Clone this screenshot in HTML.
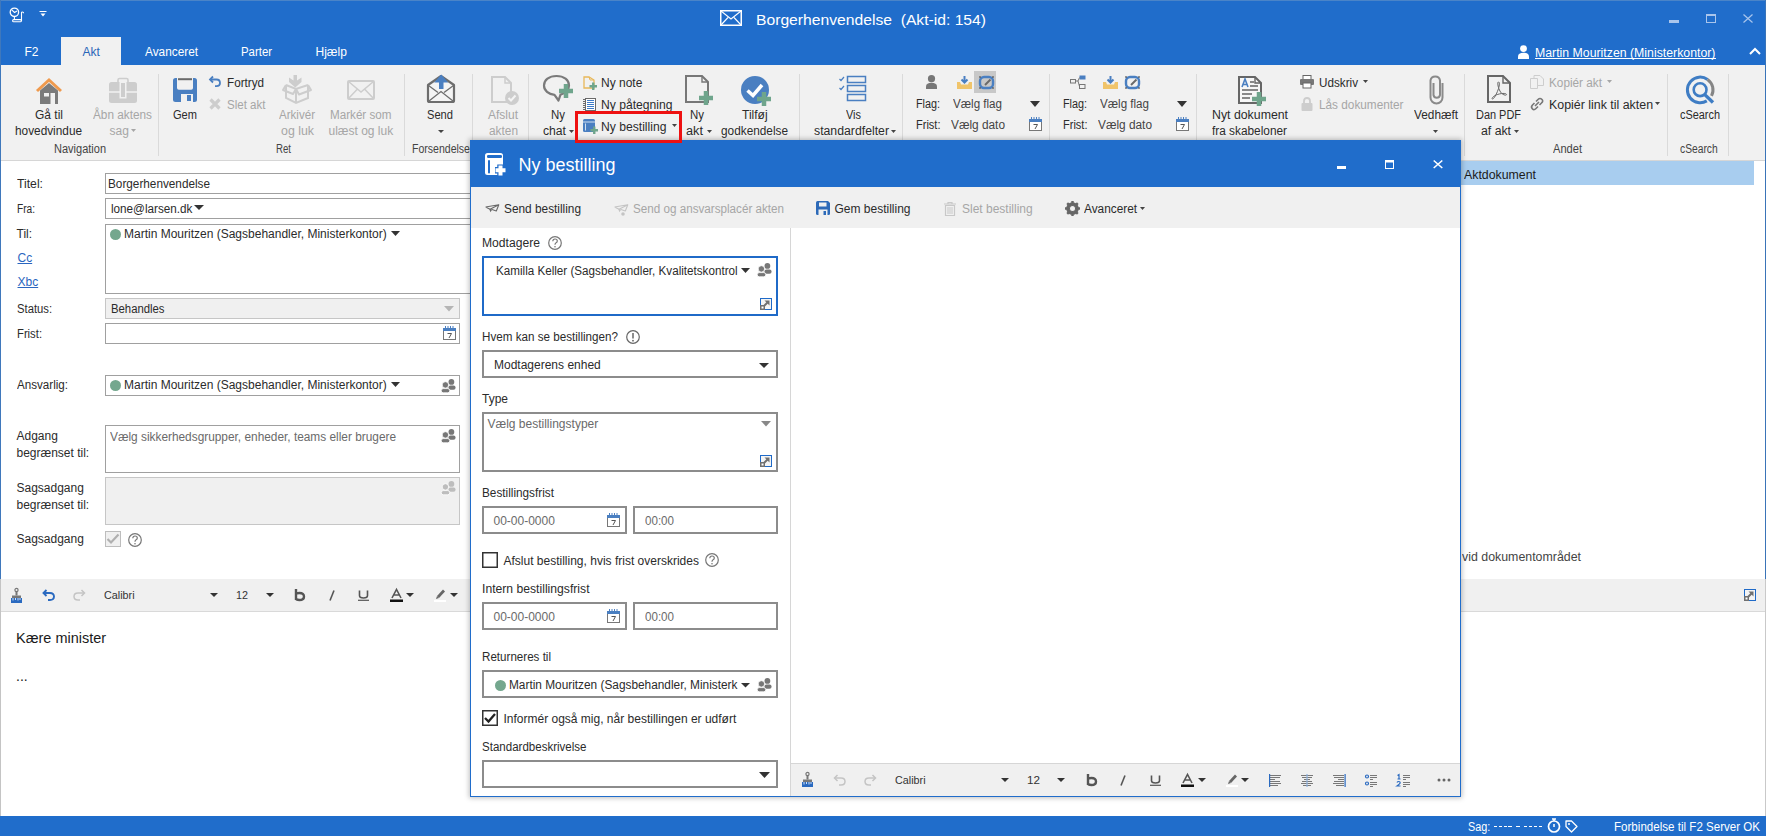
<!DOCTYPE html>
<html><head><meta charset="utf-8">
<style>
*{box-sizing:border-box}
html,body{margin:0;padding:0}
body{width:1766px;height:836px;overflow:hidden;position:relative;background:#fff;font-family:"Liberation Sans",sans-serif;font-size:12px;color:#262626}
.a{position:absolute}
.t{position:absolute;white-space:nowrap;line-height:1}
svg{position:absolute;overflow:visible}
</style></head><body>

<div class="a" style="left:0px;top:0px;width:1766px;height:65px;background:#206dcb"></div>
<div class="a" style="left:0px;top:0px;width:1766px;height:1px;background:#4a84c8"></div>
<div class="a" style="left:1px;top:65px;width:1764px;height:96px;background:#f1f1f1;border-bottom:1px solid #d6d6d6"></div>
<div class="a" style="left:0px;top:0px;width:1px;height:579px;background:#3f78bc"></div>
<div class="a" style="left:0px;top:579px;width:1px;height:237px;background:#c4c4c4"></div>
<div class="a" style="left:1765px;top:0px;width:1px;height:579px;background:#3a74b8"></div>
<div class="a" style="left:1765px;top:579px;width:1px;height:237px;background:#c9c9c9"></div>
<div class="a" style="left:1px;top:579px;width:1764px;height:33px;background:#f0f0f0;border-bottom:1px solid #d9d9d9"></div>
<div class="a" style="left:0px;top:816px;width:1766px;height:20px;background:#206dcb"></div>
<svg style="left:9px;top:7px;" width="16" height="16" viewBox="0 0 16 16"><circle cx="5.4" cy="5.3" r="4.2" fill="none" stroke="#fff" stroke-width="1.3"/><path d="M2.8 2.8L5.5 5.5L8 4" fill="none" stroke="#fff" stroke-width="1.1"/><path d="M5.4 9.5V12.5" stroke="#fff" stroke-width="1.1"/><rect x="3.6" y="12.6" width="8.8" height="2.2" rx="1.1" fill="none" stroke="#fff" stroke-width="1.1"/><path d="M12.5 14V5.5Q12.5 5 13.5 5Q14.6 5 14.6 6.3" fill="none" stroke="#fff" stroke-width="1.1"/></svg>
<svg style="left:39px;top:11px;" width="8" height="7" viewBox="0 0 8 7"><path d="M0.5 0.5H7.5" stroke="#fff" stroke-width="1"/><path d="M1.5 2.5H6.5L4 5.5Z" fill="#fff"/></svg>
<svg style="left:720px;top:10px;" width="22" height="16" viewBox="0 0 22 16"><rect x="0.75" y="0.75" width="20.5" height="14.5" fill="none" stroke="#fff" stroke-width="1.5"/><path d="M1 1L11 9L21 1M1 15L8 7.5M21 15L14 7.5" fill="none" stroke="#fff" stroke-width="1.1"/></svg>
<span class="t" style="left:755.5px;top:12px;font-size:15px;color:#ffffff;transform:scaleX(1.045);transform-origin:0 0;">Borgerhenvendelse&nbsp;&nbsp;(Akt-id: 154)</span>
<div class="a" style="left:1669px;top:20px;width:10px;height:3px;background:#a9c5ec"></div>
<svg style="left:1706px;top:14px;" width="10" height="9" viewBox="0 0 10 9"><rect x="0.5" y="0.5" width="9" height="8" fill="none" stroke="#a9c5ec" stroke-width="1"/><rect x="0" y="0" width="10" height="2" fill="#a9c5ec"/></svg>
<svg style="left:1743px;top:14px;" width="10" height="9" viewBox="0 0 10 9"><path d="M0.5 0.5L9.5 8.5M9.5 0.5L0.5 8.5" stroke="#a9c5ec" stroke-width="1.2"/></svg>
<div class="a" style="left:61px;top:37px;width:60px;height:28px;background:#f1f1f1"></div>
<span class="t" style="left:24.5px;top:46px;font-size:12px;color:#ffffff;">F2</span>
<span class="t" style="left:82.5px;top:46px;font-size:12px;color:#2a66b8;">Akt</span>
<span class="t" style="left:144.5px;top:46px;font-size:12px;color:#ffffff;transform:scaleX(0.985);transform-origin:0 0;">Avanceret</span>
<span class="t" style="left:241.0px;top:46px;font-size:12px;color:#ffffff;transform:scaleX(0.949);transform-origin:0 0;">Parter</span>
<span class="t" style="left:315.5px;top:46px;font-size:12px;color:#ffffff;">Hjælp</span>
<svg style="left:1518px;top:45px;" width="11" height="14" viewBox="0 0 11 14"><circle cx="5.5" cy="3.6" r="3.4" fill="#fff"/><path d="M0 14V11.5C0 9 2 7.8 5.5 7.8S11 9 11 11.5V14Z" fill="#fff"/></svg>
<span class="t" style="left:1535.0px;top:47px;font-size:12px;color:#ffffff;transform:scaleX(1.025);transform-origin:0 0;">Martin Mouritzen (Ministerkontor)</span>
<div class="a" style="left:1535px;top:58px;width:181px;height:1px;background:#fff"></div>
<svg style="left:1749px;top:47px;" width="12" height="8" viewBox="0 0 12 8"><path d="M1 7L6 2L11 7" fill="none" stroke="#fff" stroke-width="2"/></svg>
<div class="a" style="left:158px;top:74px;width:1px;height:82px;background:#dadada"></div>
<div class="a" style="left:404px;top:74px;width:1px;height:82px;background:#dadada"></div>
<div class="a" style="left:472px;top:74px;width:1px;height:82px;background:#dadada"></div>
<div class="a" style="left:528px;top:74px;width:1px;height:82px;background:#dadada"></div>
<div class="a" style="left:799px;top:74px;width:1px;height:82px;background:#dadada"></div>
<div class="a" style="left:902px;top:74px;width:1px;height:82px;background:#dadada"></div>
<div class="a" style="left:1049px;top:74px;width:1px;height:82px;background:#dadada"></div>
<div class="a" style="left:1196px;top:74px;width:1px;height:82px;background:#dadada"></div>
<div class="a" style="left:1464px;top:74px;width:1px;height:82px;background:#dadada"></div>
<div class="a" style="left:1667px;top:74px;width:1px;height:82px;background:#dadada"></div>
<div class="a" style="left:1728px;top:74px;width:1px;height:82px;background:#dadada"></div>
<span class="t" style="left:53.5px;top:143px;font-size:12px;color:#444;transform:scaleX(0.917);transform-origin:0 0;">Navigation</span>
<span class="t" style="left:275.5px;top:143px;font-size:12px;color:#444;transform:scaleX(0.803);transform-origin:0 0;">Ret</span>
<span class="t" style="left:411.5px;top:143px;font-size:12px;color:#444;transform:scaleX(0.878);transform-origin:0 0;">Forsendelse</span>
<span class="t" style="left:1552.5px;top:143px;font-size:12px;color:#444;transform:scaleX(0.925);transform-origin:0 0;">Andet</span>
<span class="t" style="left:1680.0px;top:143px;font-size:12px;color:#444;transform:scaleX(0.857);transform-origin:0 0;">cSearch</span>
<svg style="left:35px;top:78px;" width="28" height="26" viewBox="0 0 28 26"><path d="M2 13L14 2L26 13" fill="none" stroke="#ef9a4e" stroke-width="3"/><path d="M5 12.5L14 5L23 12.5V26H5Z" fill="#7b7b7b"/><rect x="9" y="15" width="5" height="3.5" fill="#f1f1f1"/><rect x="15.5" y="15" width="4.5" height="11" fill="#f1f1f1"/></svg>
<span class="t" style="left:35.0px;top:109px;font-size:12px;color:#2b2b2b;">Gå til</span>
<span class="t" style="left:14.5px;top:125px;font-size:12px;color:#2b2b2b;transform:scaleX(0.985);transform-origin:0 0;">hovedvindue</span>
<svg style="left:109px;top:78px;" width="28" height="25" viewBox="0 0 28 25"><rect x="9" y="0.5" width="10" height="5" rx="1.5" fill="none" stroke="#cdcdcd" stroke-width="1.6"/><rect x="0" y="4" width="28" height="21" rx="2.5" fill="#cdcdcd"/><path d="M0 14H28" stroke="#f1f1f1" stroke-width="1.5"/><rect x="10.5" y="3.5" width="7" height="17" fill="#f1f1f1"/><rect x="12" y="5" width="4" height="14" fill="#cdcdcd"/></svg>
<span class="t" style="left:92.5px;top:109px;font-size:12px;color:#a6a6a6;transform:scaleX(0.983);transform-origin:0 0;">Åbn aktens</span>
<span class="t" style="left:109.5px;top:125px;font-size:12px;color:#a6a6a6;">sag</span>
<svg style="left:131px;top:129px;" width="5" height="3" viewBox="0 0 5 3"><path d="M0 0H5L2.5 3Z" fill="#a6a6a6"/></svg>
<svg style="left:173px;top:78px;" width="24" height="24" viewBox="0 0 24 24"><path d="M0 2.5Q0 0 2.5 0H21.5Q24 0 24 2.5V21.5Q24 24 21.5 24H2.5Q0 24 0 21.5Z" fill="#4a7fc1"/><path d="M4 0H20V10Q20 11.8 18.2 11.8H5.8Q4 11.8 4 10Z" fill="#f1f1f1"/><rect x="5" y="0.2" width="14" height="2" fill="#6a6a6a"/><rect x="8" y="16" width="12" height="8" fill="#f1f1f1"/><rect x="14" y="17" width="4" height="6" fill="#4a7fc1"/></svg>
<span class="t" style="left:172.5px;top:109px;font-size:12px;color:#2b2b2b;transform:scaleX(0.923);transform-origin:0 0;">Gem</span>
<svg style="left:209px;top:76px;" width="12" height="11" viewBox="0 0 12 11"><path d="M1 3.5H7.5Q11 3.5 11 7Q11 10.2 7.5 10.2H6" fill="none" stroke="#4a7fc1" stroke-width="1.8"/><path d="M4 0.5L1 3.5L4 6.5" fill="none" stroke="#4a7fc1" stroke-width="1.8"/></svg>
<span class="t" style="left:227.0px;top:77px;font-size:12px;color:#2b2b2b;transform:scaleX(0.974);transform-origin:0 0;">Fortryd</span>
<svg style="left:209px;top:98px;" width="12" height="12" viewBox="0 0 12 12"><path d="M1.5 1.5L10.5 10.5M10.5 1.5L1.5 10.5" stroke="#cdcdcd" stroke-width="3.2"/></svg>
<span class="t" style="left:227.0px;top:99px;font-size:12px;color:#a6a6a6;transform:scaleX(0.963);transform-origin:0 0;">Slet akt</span>
<svg style="left:282px;top:75px;" width="30" height="30" viewBox="0 0 30 30"><path d="M4 10L14 14L26 10M4 10V23L14 28L26 23V10M14 14V28" fill="none" stroke="#cdcdcd" stroke-width="2"/><path d="M26 10L29 15L17 19.5L14 14M4 10L1 15L11 19L14 14" fill="none" stroke="#cdcdcd" stroke-width="2" stroke-linejoin="round"/><polygon points="11.5,0 15,0 15,5.5 19.5,2.5 19.5,7 13.25,12.5 7,7 7,2.5 11.5,5.5" fill="#cdcdcd"/></svg>
<span class="t" style="left:279.0px;top:109px;font-size:12px;color:#a6a6a6;transform:scaleX(0.964);transform-origin:0 0;">Arkivér</span>
<span class="t" style="left:280.5px;top:125px;font-size:12px;color:#a6a6a6;transform:scaleX(1.031);transform-origin:0 0;">og luk</span>
<svg style="left:347px;top:80px;" width="28" height="20" viewBox="0 0 28 20"><rect x="1" y="1" width="26" height="18" rx="1" fill="none" stroke="#cdcdcd" stroke-width="2"/><path d="M1.5 1.5L14 12L26.5 1.5M1.5 18.5L10 9.5M26.5 18.5L18 9.5" fill="none" stroke="#cdcdcd" stroke-width="1.5"/></svg>
<span class="t" style="left:329.5px;top:109px;font-size:12px;color:#a6a6a6;transform:scaleX(0.971);transform-origin:0 0;">Markér som</span>
<span class="t" style="left:328.5px;top:125px;font-size:12px;color:#a6a6a6;">ulæst og luk</span>
<svg style="left:427px;top:74px;" width="29" height="30" viewBox="0 0 29 30"><path d="M1 11L14 2L27 11V26.5Q27 28 25.5 28H2.5Q1 28 1 26.5Z" fill="#f4f4f4" stroke="#6d6d6d" stroke-width="2.2" stroke-linejoin="round"/><path d="M1.5 11.5L11 18.5M26.5 11.5L17 18.5M2 27L14 17.5L26 27" fill="none" stroke="#6d6d6d" stroke-width="1.3"/><path d="M14.2 0.5L21.2 8.5H16.5V15H12V8.5H7.2Z" fill="#4a7fc1"/></svg>
<span class="t" style="left:427.0px;top:109px;font-size:12px;color:#2b2b2b;transform:scaleX(0.928);transform-origin:0 0;">Send</span>
<svg style="left:437.5px;top:130px;" width="6" height="3" viewBox="0 0 6 3"><path d="M0 0H6L3 3Z" fill="#444"/></svg>
<svg style="left:491px;top:76px;" width="28" height="30" viewBox="0 0 28 30"><path d="M1 1H14L20 7V26H1Z" fill="none" stroke="#cdcdcd" stroke-width="2"/><path d="M14 1V7H20" fill="none" stroke="#cdcdcd" stroke-width="1.5"/><circle cx="21" cy="22" r="7" fill="#cdcdcd"/><path d="M17.5 22L20 24.5L24.5 19.5" fill="none" stroke="#f4f4f4" stroke-width="2"/></svg>
<span class="t" style="left:488.0px;top:109px;font-size:12px;color:#a6a6a6;">Afslut</span>
<span class="t" style="left:488.5px;top:125px;font-size:12px;color:#a6a6a6;transform:scaleX(0.988);transform-origin:0 0;">akten</span>
<svg style="left:543px;top:75px;" width="30" height="27" viewBox="0 0 30 27"><path d="M13.5 1C6 1 1 5 1 10.5C1 15.5 5.5 19.3 11.5 19.8L15.5 25.5L17.5 19.6C22.5 18.5 26 15 26 10.5C26 5 21 1 13.5 1Z" fill="none" stroke="#7a7a7a" stroke-width="2.2" stroke-linejoin="round"/><path d="M23.0 9V23M16 16.0H30" stroke="#6fa58c" stroke-width="4.5"/></svg>
<span class="t" style="left:550.5px;top:109px;font-size:12px;color:#2b2b2b;transform:scaleX(0.954);transform-origin:0 0;">Ny</span>
<span class="t" style="left:543.0px;top:125px;font-size:12px;color:#2b2b2b;transform:scaleX(1.014);transform-origin:0 0;">chat</span>
<svg style="left:569px;top:130px;" width="5" height="3" viewBox="0 0 5 3"><path d="M0 0H5L2.5 3Z" fill="#444"/></svg>
<svg style="left:583px;top:76px;" width="14" height="14" viewBox="0 0 14 14"><path d="M1 1H6L11 4V12H1Z" fill="none" stroke="#e8b85a" stroke-width="1.3"/><path d="M6 1L7 4H11" fill="none" stroke="#e8b85a" stroke-width="1"/><path d="M10.25 6.5V14.0M6.5 10.25H14.0" stroke="#6fa58c" stroke-width="2.4"/></svg>
<span class="t" style="left:601.0px;top:77px;font-size:12px;color:#2b2b2b;">Ny note</span>
<svg style="left:583px;top:98px;" width="13" height="14" viewBox="0 0 13 14"><rect x="2.5" y="0.5" width="10" height="12" fill="#fff" stroke="#6a6a6a" stroke-width="1"/><path d="M4 2.5H11M4 4.5H11M4 6.5H11M4 8.5H11M4 10.5H11" stroke="#3f7cc8" stroke-width="1"/><path d="M0 1.5H3M0 3.5H3M0 5.5H3M0 7.5H3M0 9.5H3M0 11.5H3" stroke="#6a6a6a" stroke-width="1"/></svg>
<span class="t" style="left:601.0px;top:99px;font-size:12px;color:#2b2b2b;transform:scaleX(1.011);transform-origin:0 0;">Ny påtegning</span>
<svg style="left:583px;top:119px;" width="15" height="15" viewBox="0 0 15 15"><rect x="0" y="0" width="12" height="13" rx="1.5" fill="#4a7fc1"/><rect x="0" y="2.5" width="12" height="1" fill="#cfe0f2"/><rect x="2" y="4.5" width="1" height="7" fill="#cfe0f2"/><path d="M11.25 7.5V15.0M7.5 11.25H15.0" stroke="#6fa58c" stroke-width="2.4"/></svg>
<span class="t" style="left:601.0px;top:121px;font-size:12px;color:#2b2b2b;transform:scaleX(1.012);transform-origin:0 0;">Ny bestilling</span>
<svg style="left:671.5px;top:124px;" width="5" height="3" viewBox="0 0 5 3"><path d="M0 0H5L2.5 3Z" fill="#444"/></svg>
<div class="a" style="left:575px;top:111px;width:107px;height:32px;border:3px solid #ee1111;z-index:5"></div>
<svg style="left:685px;top:75px;" width="29" height="30" viewBox="0 0 29 30"><path d="M1 1H17L23 7V27H1Z" fill="none" stroke="#777" stroke-width="2"/><path d="M17 1V7H23" fill="none" stroke="#777" stroke-width="1.4"/><path d="M21.0 16V30M14 23.0H28" stroke="#6fa58c" stroke-width="4.5"/></svg>
<span class="t" style="left:689.5px;top:109px;font-size:12px;color:#2b2b2b;transform:scaleX(0.954);transform-origin:0 0;">Ny</span>
<span class="t" style="left:686.0px;top:125px;font-size:12px;color:#2b2b2b;transform:scaleX(1.062);transform-origin:0 0;">akt</span>
<svg style="left:707px;top:130px;" width="5" height="3" viewBox="0 0 5 3"><path d="M0 0H5L2.5 3Z" fill="#444"/></svg>
<svg style="left:741px;top:76px;" width="31" height="30" viewBox="0 0 31 30"><circle cx="14" cy="14" r="14" fill="#4a7fc1"/><path d="M6.5 14.5L12 19.5L21 9" fill="none" stroke="#fff" stroke-width="3.5"/><circle cx="21.5" cy="22" r="8" fill="#4a7fc1" opacity="0"/><path d="M23.0 16V30M16 23.0H30" stroke="#6fa58c" stroke-width="4.5"/></svg>
<span class="t" style="left:742.0px;top:109px;font-size:12px;color:#2b2b2b;">Tilføj</span>
<span class="t" style="left:721.0px;top:125px;font-size:12px;color:#2b2b2b;transform:scaleX(0.985);transform-origin:0 0;">godkendelse</span>
<svg style="left:839px;top:76px;" width="27" height="26" viewBox="0 0 27 26"><rect x="8.5" y="0.5" width="18" height="6" fill="none" stroke="#4a7fc1" stroke-width="1.5"/><rect x="8.5" y="9.5" width="18" height="6" fill="none" stroke="#4a7fc1" stroke-width="1.5"/><rect x="8.5" y="18.5" width="18" height="6" fill="none" stroke="#4a7fc1" stroke-width="1.5"/><path d="M0.5 3L2 4.5L5 1M0.5 12L2 13.5L5 10" fill="none" stroke="#4a7fc1" stroke-width="1.2"/></svg>
<span class="t" style="left:845.5px;top:109px;font-size:12px;color:#2b2b2b;transform:scaleX(0.912);transform-origin:0 0;">Vis</span>
<span class="t" style="left:814.0px;top:125px;font-size:12px;color:#2b2b2b;transform:scaleX(1.022);transform-origin:0 0;">standardfelter</span>
<svg style="left:891px;top:130px;" width="5" height="3" viewBox="0 0 5 3"><path d="M0 0H5L2.5 3Z" fill="#444"/></svg>
<svg style="left:926px;top:75px;" width="11" height="14" viewBox="0 0 11 14"><circle cx="5.5" cy="3.7" r="3.6" fill="#777"/><path d="M0 14V11.5C0 9 2.2 7.8 5.5 7.8S11 9 11 11.5V14Z" fill="#777"/></svg>
<svg style="left:957px;top:76px;" width="15" height="13" viewBox="0 0 15 13"><path d="M7.5 0V6M4.5 3.5L7.5 6.5L10.5 3.5" fill="none" stroke="#4a7fc1" stroke-width="2"/><path d="M0 6H3L4 8.5H11L12 6H15V13H0Z" fill="#f0c46a"/></svg>
<div class="a" style="left:974px;top:71px;width:22px;height:22px;background:#c8c8c8"></div>
<svg style="left:979px;top:76px;" width="15" height="13" viewBox="0 0 15 13"><rect x="1" y="1" width="13" height="11" rx="4" fill="none" stroke="#4a7fc1" stroke-width="2.4"/><path d="M6 9L11.5 3.5" stroke="#6a6a6a" stroke-width="2"/><path d="M0 0H2V2H0ZM13 0H15V2H13ZM0 11H2V13H0ZM13 11H15V13H13Z" fill="#555" opacity="0.6"/></svg>
<span class="t" style="left:916.0px;top:98px;font-size:12px;color:#2b2b2b;transform:scaleX(0.900);transform-origin:0 0;">Flag:</span>
<span class="t" style="left:953.0px;top:98px;font-size:12px;color:#444;transform:scaleX(0.967);transform-origin:0 0;">Vælg flag</span>
<svg style="left:1030px;top:101px;" width="10" height="6" viewBox="0 0 10 6"><path d="M0 0H10L5 6Z" fill="#333"/></svg>
<span class="t" style="left:916.0px;top:119px;font-size:12px;color:#2b2b2b;transform:scaleX(0.919);transform-origin:0 0;">Frist:</span>
<span class="t" style="left:950.5px;top:119px;font-size:12px;color:#444;transform:scaleX(0.987);transform-origin:0 0;">Vælg dato</span>
<svg style="left:1029px;top:117px;" width="13" height="14" viewBox="0 0 13 14"><rect x="0.5" y="3" width="12" height="10.5" fill="#fff" stroke="#777" stroke-width="1"/><rect x="0" y="2" width="13" height="3" fill="#4a7fc1"/><path d="M2.5 0V2M5 0V2M7.5 0V2M10 0V2" stroke="#4a7fc1" stroke-width="1"/><path d="M4.5 7.5H8.5L6 12" fill="none" stroke="#555" stroke-width="1"/></svg>
<svg style="left:1070px;top:75px;" width="16" height="14" viewBox="0 0 16 14"><rect x="0.5" y="4.5" width="5" height="3.5" fill="none" stroke="#777" stroke-width="1"/><rect x="9.5" y="0.5" width="6" height="4" fill="#4a7fc1"/><rect x="9.5" y="9.5" width="5.5" height="4" fill="none" stroke="#777" stroke-width="1"/><path d="M5.5 6H8L9.5 2.5M8 6L9.5 11.5" fill="none" stroke="#777" stroke-width="1"/></svg>
<svg style="left:1103px;top:76px;" width="15" height="13" viewBox="0 0 15 13"><path d="M7.5 0V6M4.5 3.5L7.5 6.5L10.5 3.5" fill="none" stroke="#4a7fc1" stroke-width="2"/><path d="M0 6H3L4 8.5H11L12 6H15V13H0Z" fill="#f0c46a"/></svg>
<svg style="left:1125px;top:76px;" width="15" height="13" viewBox="0 0 15 13"><rect x="1" y="1" width="13" height="11" rx="4" fill="none" stroke="#4a7fc1" stroke-width="2.4"/><path d="M6 9L11.5 3.5" stroke="#6a6a6a" stroke-width="2"/><path d="M0 0H2V2H0ZM13 0H15V2H13ZM0 11H2V13H0ZM13 11H15V13H13Z" fill="#555" opacity="0.6"/></svg>
<span class="t" style="left:1063.0px;top:98px;font-size:12px;color:#2b2b2b;transform:scaleX(0.900);transform-origin:0 0;">Flag:</span>
<span class="t" style="left:1100.0px;top:98px;font-size:12px;color:#444;transform:scaleX(0.967);transform-origin:0 0;">Vælg flag</span>
<svg style="left:1177px;top:101px;" width="10" height="6" viewBox="0 0 10 6"><path d="M0 0H10L5 6Z" fill="#333"/></svg>
<span class="t" style="left:1063.0px;top:119px;font-size:12px;color:#2b2b2b;transform:scaleX(0.919);transform-origin:0 0;">Frist:</span>
<span class="t" style="left:1097.5px;top:119px;font-size:12px;color:#444;transform:scaleX(0.987);transform-origin:0 0;">Vælg dato</span>
<svg style="left:1176px;top:117px;" width="13" height="14" viewBox="0 0 13 14"><rect x="0.5" y="3" width="12" height="10.5" fill="#fff" stroke="#777" stroke-width="1"/><rect x="0" y="2" width="13" height="3" fill="#4a7fc1"/><path d="M2.5 0V2M5 0V2M7.5 0V2M10 0V2" stroke="#4a7fc1" stroke-width="1"/><path d="M4.5 7.5H8.5L6 12" fill="none" stroke="#555" stroke-width="1"/></svg>
<svg style="left:1238px;top:76px;" width="29" height="31" viewBox="0 0 29 31"><path d="M1 1H17L23 7V27H1Z" fill="#f7f7f7" stroke="#666" stroke-width="2"/><path d="M17 1V7H23" fill="none" stroke="#666" stroke-width="1.4"/><path d="M4 11L7 3L10 11M5 8.5H9" fill="none" stroke="#4a7fc1" stroke-width="1.6"/><path d="M12 6H16M12 10H20M4 14H20M4 18H14M4 22H12" stroke="#666" stroke-width="1.5"/><path d="M21.0 16V30M14 23.0H28" stroke="#6fa58c" stroke-width="4.5"/></svg>
<span class="t" style="left:1211.5px;top:109px;font-size:12px;color:#2b2b2b;transform:scaleX(1.027);transform-origin:0 0;">Nyt dokument</span>
<span class="t" style="left:1212.0px;top:125px;font-size:12px;color:#2b2b2b;transform:scaleX(0.986);transform-origin:0 0;">fra skabeloner</span>
<svg style="left:1300px;top:75px;" width="14" height="13" viewBox="0 0 14 13"><rect x="3" y="0.5" width="8" height="4" fill="#fff" stroke="#666" stroke-width="1"/><rect x="0" y="4" width="14" height="6" rx="1" fill="#777"/><rect x="3" y="8" width="8" height="5" fill="#fff" stroke="#666" stroke-width="1"/></svg>
<span class="t" style="left:1318.5px;top:77px;font-size:12px;color:#2b2b2b;transform:scaleX(0.975);transform-origin:0 0;">Udskriv</span>
<svg style="left:1363px;top:80px;" width="5" height="3" viewBox="0 0 5 3"><path d="M0 0H5L2.5 3Z" fill="#444"/></svg>
<svg style="left:1301px;top:97px;" width="12" height="14" viewBox="0 0 12 14"><path d="M3 6V4Q3 1 6 1Q9 1 9 4V6" fill="none" stroke="#cdcdcd" stroke-width="1.8"/><rect x="0.5" y="6" width="11" height="8" rx="1" fill="#cdcdcd"/></svg>
<span class="t" style="left:1318.5px;top:99px;font-size:12px;color:#a6a6a6;transform:scaleX(0.982);transform-origin:0 0;">Lås dokumenter</span>
<svg style="left:1429px;top:74px;" width="15" height="30" viewBox="0 0 15 30"><path d="M13.5 9V23.5A6 6 0 0 1 1.5 23.5V6.5A4.8 4.8 0 0 1 11 6.5V21A3.3 3.3 0 0 1 4.5 21V9" fill="none" stroke="#8a8a8a" stroke-width="2"/></svg>
<span class="t" style="left:1413.5px;top:109px;font-size:12px;color:#2b2b2b;transform:scaleX(0.985);transform-origin:0 0;">Vedhæft</span>
<svg style="left:1433px;top:130px;" width="5" height="3" viewBox="0 0 5 3"><path d="M0 0H5L2.5 3Z" fill="#444"/></svg>
<svg style="left:1487px;top:75px;" width="24" height="28" viewBox="0 0 24 28"><path d="M1 1H16L23 8V27H1Z" fill="none" stroke="#666" stroke-width="2"/><path d="M16 1V8H23" fill="none" stroke="#666" stroke-width="1.4"/><path d="M11.5 7C10 7 11 13 13.5 17C15.5 20 19.5 21 19.5 19.5C19.5 18 14 18 9 20C5 22 4.5 24 5.5 24C7 24 9.5 19 11 15C12.5 11 13 7 11.5 7Z" fill="none" stroke="#666" stroke-width="1"/></svg>
<span class="t" style="left:1476.0px;top:109px;font-size:12px;color:#2b2b2b;transform:scaleX(0.912);transform-origin:0 0;">Dan PDF</span>
<span class="t" style="left:1481.0px;top:125px;font-size:12px;color:#2b2b2b;transform:scaleX(1.023);transform-origin:0 0;">af akt</span>
<svg style="left:1514px;top:130px;" width="5" height="3" viewBox="0 0 5 3"><path d="M0 0H5L2.5 3Z" fill="#444"/></svg>
<svg style="left:1530px;top:75px;" width="14" height="14" viewBox="0 0 14 14"><path d="M0.5 3.5H7.5V13.5H0.5Z" fill="none" stroke="#cdcdcd" stroke-width="1"/><path d="M4 3.5V0.5H10L13.5 4V10.5H7.5" fill="none" stroke="#cdcdcd" stroke-width="1"/></svg>
<span class="t" style="left:1549.0px;top:77px;font-size:12px;color:#a6a6a6;transform:scaleX(0.981);transform-origin:0 0;">Kopiér akt</span>
<svg style="left:1606.5px;top:80px;" width="5" height="3" viewBox="0 0 5 3"><path d="M0 0H5L2.5 3Z" fill="#a6a6a6"/></svg>
<svg style="left:1530px;top:97px;" width="14" height="14" viewBox="0 0 14 14"><path d="M6 4.5L8 2.5Q10 0.5 12 2.5Q13.5 4 11.5 6L9.5 8M8 9.5L6 11.5Q4 13.5 2.5 12Q0.5 10 2.5 8L4.5 6M5 9L9 5" fill="none" stroke="#777" stroke-width="1.6"/></svg>
<span class="t" style="left:1549.0px;top:99px;font-size:12px;color:#2b2b2b;transform:scaleX(1.033);transform-origin:0 0;">Kopiér link til akten</span>
<svg style="left:1655px;top:102px;" width="5" height="3" viewBox="0 0 5 3"><path d="M0 0H5L2.5 3Z" fill="#444"/></svg>
<svg style="left:1686px;top:76px;" width="29" height="28" viewBox="0 0 29 28"><path d="M20.8 24.87A12.8 12.8 0 1 1 21.55 3.42" fill="none" stroke="#3f7dc4" stroke-width="3"/><path d="M21.55 3.42A12.8 12.8 0 0 1 25.5 19.9" fill="none" stroke="#858585" stroke-width="3"/><circle cx="14.1" cy="13.7" r="6.4" fill="none" stroke="#3f7dc4" stroke-width="2.6"/><path d="M18.8 18.6L27 26.5" stroke="#3f7dc4" stroke-width="3.4"/></svg>
<span class="t" style="left:1679.5px;top:109px;font-size:12px;color:#2b2b2b;transform:scaleX(0.909);transform-origin:0 0;">cSearch</span>
<span class="t" style="left:16.5px;top:178px;font-size:12px;color:#2b2b2b;transform:scaleX(1.017);transform-origin:0 0;">Titel:</span>
<span class="t" style="left:17.0px;top:203px;font-size:12px;color:#2b2b2b;transform:scaleX(0.844);transform-origin:0 0;">Fra:</span>
<span class="t" style="left:16.5px;top:228px;font-size:12px;color:#2b2b2b;">Til:</span>
<span class="t" style="left:17.5px;top:252px;font-size:12px;color:#2a66c0;text-decoration:underline">Cc</span>
<span class="t" style="left:17.5px;top:276px;font-size:12px;color:#2a66c0;text-decoration:underline">Xbc</span>
<span class="t" style="left:16.5px;top:303px;font-size:12px;color:#2b2b2b;transform:scaleX(0.938);transform-origin:0 0;">Status:</span>
<span class="t" style="left:16.5px;top:328px;font-size:12px;color:#2b2b2b;transform:scaleX(0.938);transform-origin:0 0;">Frist:</span>
<span class="t" style="left:16.5px;top:379px;font-size:12px;color:#2b2b2b;transform:scaleX(0.968);transform-origin:0 0;">Ansvarlig:</span>
<span class="t" style="left:16.5px;top:430px;font-size:12px;color:#2b2b2b;">Adgang</span>
<span class="t" style="left:16.5px;top:447px;font-size:12px;color:#2b2b2b;">begrænset til:</span>
<span class="t" style="left:16.5px;top:482px;font-size:12px;color:#2b2b2b;">Sagsadgang</span>
<span class="t" style="left:16.5px;top:499px;font-size:12px;color:#2b2b2b;">begrænset til:</span>
<span class="t" style="left:16.5px;top:533px;font-size:12px;color:#2b2b2b;">Sagsadgang</span>
<div class="a" style="left:105px;top:173px;width:400px;height:21px;border:1px solid #a0a0a0;background:#fff"></div>
<span class="t" style="left:108.0px;top:178px;font-size:12px;color:#2b2b2b;transform:scaleX(0.980);transform-origin:0 0;">Borgerhenvendelse</span>
<div class="a" style="left:105px;top:198px;width:400px;height:21px;border:1px solid #a0a0a0;background:#fff"></div>
<span class="t" style="left:110.5px;top:203px;font-size:12px;color:#2b2b2b;transform:scaleX(0.975);transform-origin:0 0;">lone@larsen.dk</span>
<svg style="left:194px;top:205px;" width="10" height="5" viewBox="0 0 10 5"><path d="M0 0H10L5.0 5Z" fill="#333"/></svg>
<div class="a" style="left:105px;top:224px;width:400px;height:70px;border:1px solid #a0a0a0;background:#fff"></div>
<svg style="left:110px;top:228.5px;" width="11" height="11" viewBox="0 0 11 11"><circle cx="5.5" cy="5.5" r="5.5" fill="#74a78e"/></svg>
<span class="t" style="left:124.0px;top:228px;font-size:12px;color:#2b2b2b;">Martin Mouritzen (Sagsbehandler, Ministerkontor)</span>
<svg style="left:391px;top:231px;" width="9" height="5" viewBox="0 0 9 5"><path d="M0 0H9L4.5 5Z" fill="#333"/></svg>
<div class="a" style="left:105px;top:298px;width:355px;height:21px;border:1px solid #c6c6c6;background:#f0f0f0"></div>
<span class="t" style="left:111.0px;top:303px;font-size:12px;color:#2b2b2b;transform:scaleX(0.944);transform-origin:0 0;">Behandles</span>
<svg style="left:444px;top:306px;" width="10" height="5.5" viewBox="0 0 10 5.5"><path d="M0 0H10L5.0 5.5Z" fill="#b5b5b5"/></svg>
<div class="a" style="left:105px;top:323px;width:355px;height:21px;border:1px solid #a0a0a0;background:#fff"></div>
<svg style="left:443px;top:326px;" width="13" height="14" viewBox="0 0 13 14"><rect x="0.5" y="3" width="12" height="10.5" fill="#fff" stroke="#777" stroke-width="1"/><rect x="0" y="2" width="13" height="3" fill="#4a7fc1"/><path d="M2.5 0V2M5 0V2M7.5 0V2M10 0V2" stroke="#4a7fc1" stroke-width="1"/><path d="M4.5 7.5H8.5L6 12" fill="none" stroke="#555" stroke-width="1"/></svg>
<div class="a" style="left:105px;top:375px;width:355px;height:21px;border:1px solid #a0a0a0;background:#fff"></div>
<svg style="left:110px;top:379.5px;" width="11" height="11" viewBox="0 0 11 11"><circle cx="5.5" cy="5.5" r="5.5" fill="#74a78e"/></svg>
<span class="t" style="left:124.0px;top:379px;font-size:12px;color:#2b2b2b;">Martin Mouritzen (Sagsbehandler, Ministerkontor)</span>
<svg style="left:391px;top:382px;" width="9" height="5" viewBox="0 0 9 5"><path d="M0 0H9L4.5 5Z" fill="#333"/></svg>
<svg style="left:440.5px;top:379px;" width="15" height="14" viewBox="0 0 15 14"><circle cx="10.4" cy="2.9" r="2.9" fill="#777"/><rect x="7.4" y="6.6" width="7.2" height="4.2" rx="2.1" fill="#777"/><circle cx="4.4" cy="5.9" r="3.2" fill="#777" stroke="#fff" stroke-width="0.8"/><rect x="0.2" y="9.6" width="8.6" height="4.2" rx="2.1" fill="#777" stroke="#fff" stroke-width="0.8"/></svg>
<div class="a" style="left:105px;top:425px;width:355px;height:48px;border:1px solid #a0a0a0;background:#fff"></div>
<span class="t" style="left:109.5px;top:431px;font-size:12px;color:#6a6a6a;transform:scaleX(0.988);transform-origin:0 0;">Vælg sikkerhedsgrupper, enheder, teams eller brugere</span>
<svg style="left:440.5px;top:429px;" width="15" height="14" viewBox="0 0 15 14"><circle cx="10.4" cy="2.9" r="2.9" fill="#777"/><rect x="7.4" y="6.6" width="7.2" height="4.2" rx="2.1" fill="#777"/><circle cx="4.4" cy="5.9" r="3.2" fill="#777" stroke="#fff" stroke-width="0.8"/><rect x="0.2" y="9.6" width="8.6" height="4.2" rx="2.1" fill="#777" stroke="#fff" stroke-width="0.8"/></svg>
<div class="a" style="left:105px;top:477px;width:355px;height:48px;border:1px solid #c6c6c6;background:#f0f0f0"></div>
<svg style="left:440.5px;top:481px;" width="15" height="14" viewBox="0 0 15 14"><circle cx="10.4" cy="2.9" r="2.9" fill="#bdbdbd"/><rect x="7.4" y="6.6" width="7.2" height="4.2" rx="2.1" fill="#bdbdbd"/><circle cx="4.4" cy="5.9" r="3.2" fill="#bdbdbd" stroke="#fff" stroke-width="0.8"/><rect x="0.2" y="9.6" width="8.6" height="4.2" rx="2.1" fill="#bdbdbd" stroke="#fff" stroke-width="0.8"/></svg>
<svg style="left:105px;top:531px;" width="16" height="16" viewBox="0 0 16 16"><rect x="0.5" y="0.5" width="15" height="15" fill="#f0f0f0" stroke="#bdbdbd"/><path d="M2.5 8L6 11.5L13.5 3.5" fill="none" stroke="#b0b0b0" stroke-width="2.2"/></svg>
<svg style="left:128px;top:532.5px;" width="14" height="14" viewBox="0 0 14 14"><circle cx="7" cy="7" r="6.3" fill="none" stroke="#777" stroke-width="1.2"/><path d="M4.8 5.2Q4.8 3 7 3Q9.3 3 9.3 5Q9.3 6.3 7.8 7Q7 7.5 7 8.8" fill="none" stroke="#777" stroke-width="1.2"/><circle cx="7" cy="10.8" r="0.8" fill="#777"/></svg>
<div class="a" style="left:1461px;top:161px;width:293px;height:24px;background:#a8cdef"></div>
<span class="t" style="left:1463.5px;top:169px;font-size:12px;color:#1a1a1a;transform:scaleX(1.028);transform-origin:0 0;">Aktdokument</span>
<span class="t" style="left:1461.5px;top:551px;font-size:12px;color:#444;transform:scaleX(1.031);transform-origin:0 0;">vid dokumentområdet</span>
<svg style="left:1744px;top:589px;" width="12" height="12" viewBox="0 0 12 12"><rect x="0.5" y="0.5" width="11" height="11" fill="#f4f4f4" stroke="#1f6ac8" stroke-width="1"/><path d="M3 9L8 4" stroke="#707070" stroke-width="2"/><path d="M4.5 2.5H9.5V7.5Z" fill="#707070"/><rect x="0.75" y="7.75" width="3.5" height="3.5" fill="#fff" stroke="#707070" stroke-width="1.5"/></svg>
<svg style="left:10.5px;top:588px;" width="11" height="15" viewBox="0 0 11 15"><circle cx="5.5" cy="2" r="1.6" fill="none" stroke="#777" stroke-width="1.2"/><rect x="4.5" y="3.5" width="2" height="4" fill="#777"/><rect x="1" y="7.5" width="9" height="2.5" fill="#777"/><rect x="0" y="10" width="11" height="5" fill="#2a6ac0"/><path d="M2 10V12.5M4.5 10V12M7 10V12.5M9 10V12" stroke="#fff" stroke-width="0.8"/></svg>
<svg style="left:42px;top:589px;" width="13" height="12" viewBox="0 0 13 12"><path d="M1.5 4H8Q12 4 12 7.5Q12 11 8 11H6" fill="none" stroke="#2a6ac0" stroke-width="1.9"/><path d="M4.5 1L1.5 4L4.5 7" fill="none" stroke="#2a6ac0" stroke-width="1.9"/></svg>
<svg style="left:73px;top:589px;" width="13" height="12" viewBox="0 0 13 12"><path d="M11 4H5Q1 4 1 7.5Q1 11 5 11H7" fill="none" stroke="#c4c4c4" stroke-width="1.5"/><path d="M8.5 1L11.5 4L8.5 7" fill="none" stroke="#c4c4c4" stroke-width="1.5"/></svg>
<span class="t" style="left:103.5px;top:590px;font-size:11px;color:#333;transform:scaleX(0.979);transform-origin:0 0;">Calibri</span>
<svg style="left:210px;top:593px;" width="8" height="4" viewBox="0 0 8 4"><path d="M0 0H8L4.0 4Z" fill="#333"/></svg>
<span class="t" style="left:235.5px;top:590px;font-size:11px;color:#333;transform:scaleX(0.980);transform-origin:0 0;">12</span>
<svg style="left:266px;top:593px;" width="8" height="4" viewBox="0 0 8 4"><path d="M0 0H8L4.0 4Z" fill="#333"/></svg>
<svg style="left:294px;top:589px;" width="11" height="12" viewBox="0 0 11 12"><path d="M2 0V11M2 5.5Q2 4 5.5 4Q10 4 10 7.5Q10 11 5.5 11Q2 11 2 9" fill="none" stroke="#555" stroke-width="2.4"/></svg>
<svg style="left:328px;top:590px;" width="8" height="11" viewBox="0 0 8 11"><path d="M6 0.5L2 10.5" stroke="#555" stroke-width="1.6"/></svg>
<svg style="left:358px;top:589px;" width="11" height="12" viewBox="0 0 11 12"><path d="M1.5 1.5V6.5Q1.5 9 5.5 9Q9.5 9 9.5 6.5V1.5" fill="none" stroke="#555" stroke-width="1.6"/><path d="M0 11.3H11" stroke="#555" stroke-width="1.2"/></svg>
<svg style="left:389.5px;top:588.5px;" width="13" height="13" viewBox="0 0 13 13"><path d="M2 9L6.5 0.5L11 9M3.5 6H9.5" fill="none" stroke="#555" stroke-width="1.6"/><rect x="0" y="10.5" width="13" height="2.5" fill="#111"/></svg>
<svg style="left:405.5px;top:593px;" width="8" height="4" viewBox="0 0 8 4"><path d="M0 0H8L4.0 4Z" fill="#333"/></svg>
<svg style="left:434px;top:588px;" width="12" height="14" viewBox="0 0 12 14"><path d="M3 8L9 1.5L11 3.5L5 10Z" fill="#666"/><path d="M3 8L2 11L5 10" fill="#666"/><rect x="0" y="12" width="12" height="2" fill="#fff"/></svg>
<svg style="left:450px;top:593px;" width="8" height="4" viewBox="0 0 8 4"><path d="M0 0H8L4.0 4Z" fill="#333"/></svg>
<span class="t" style="left:16.0px;top:631px;font-size:14px;color:#1a1a1a;transform:scaleX(1.033);transform-origin:0 0;">Kære minister</span>
<span class="t" style="left:16.0px;top:669px;font-size:14px;color:#1a1a1a;">...</span>
<span class="t" style="left:1467.5px;top:821px;font-size:12px;color:#fff;transform:scaleX(0.904);transform-origin:0 0;">Sag:</span>
<div class="a" style="left:1494px;top:826px;width:18px;height:1px;background:repeating-linear-gradient(90deg,#fff 0 3.5px,transparent 3.5px 4.83px)"></div>
<div class="a" style="left:1516px;top:826px;width:4px;height:1px;background:#fff"></div>
<div class="a" style="left:1524px;top:826px;width:19px;height:1px;background:repeating-linear-gradient(90deg,#fff 0 3.5px,transparent 3.5px 5px)"></div>
<svg style="left:1547px;top:818px;" width="14" height="15" viewBox="0 0 14 15"><circle cx="7" cy="8.5" r="5.5" fill="none" stroke="#fff" stroke-width="1.7"/><path d="M5 1H9M7 1V3M7 6V9" stroke="#fff" stroke-width="1.5"/></svg>
<svg style="left:1565px;top:819.5px;" width="13" height="13" viewBox="0 0 13 13"><path d="M1 1H6.5L12 6.5L6.5 12L1 6.5Z" fill="none" stroke="#fff" stroke-width="1.3" stroke-linejoin="round"/><circle cx="4" cy="4" r="1" fill="#fff"/></svg>
<span class="t" style="left:1613.5px;top:821px;font-size:12px;color:#fff;transform:scaleX(0.965);transform-origin:0 0;">Forbindelse til F2 Server OK</span>
<div class="a" style="left:470px;top:140px;width:991px;height:657px;background:#fff;border:1px solid #206dcb;box-shadow:0 0 5px 1px rgba(0,0,0,0.25)"></div>
<div class="a" style="left:470px;top:140px;width:991px;height:47px;background:#206dcb"></div>
<div class="a" style="left:471px;top:187px;width:989px;height:41px;background:#f0f0f0"></div>
<div class="a" style="left:790px;top:228px;width:1px;height:535px;background:#d6d6d6"></div>
<div class="a" style="left:790px;top:763px;width:670px;height:33px;background:#f0f0f0;border-top:1px solid #d6d6d6;border-left:1px solid #d6d6d6"></div>
<svg style="left:485px;top:153px;" width="22" height="24" viewBox="0 0 22 24"><rect x="0" y="0" width="18" height="22" rx="2.5" fill="#fff"/><rect x="2" y="2" width="15" height="3" rx="1.2" fill="#206dcb"/><rect x="3" y="7" width="2" height="13.5" rx="1" fill="#206dcb"/><path d="M15.5 11.5V23M10 17.25H21" stroke="#206dcb" stroke-width="6.5"/><path d="M15.5 12.5V22.5M10.5 17.25H20.5" stroke="#fff" stroke-width="4"/></svg>
<span class="t" style="left:518.5px;top:156px;font-size:18px;color:#fff;">Ny bestilling</span>
<div class="a" style="left:1337px;top:166px;width:9px;height:3px;background:#fff"></div>
<svg style="left:1385px;top:160px;" width="9" height="9" viewBox="0 0 9 9"><rect x="0.5" y="0.5" width="8" height="8" fill="none" stroke="#fff" stroke-width="1"/><rect x="0" y="0" width="9" height="2.5" fill="#fff"/></svg>
<svg style="left:1433px;top:160px;" width="10" height="8.5" viewBox="0 0 10 8.5"><path d="M0.7 0.5L9.3 8M9.3 0.5L0.7 8" stroke="#fff" stroke-width="1.6"/></svg>
<svg style="left:485px;top:203.5px;" width="15" height="10" viewBox="0 0 15 10"><path d="M0.6 3L13.8 0.8L11.3 7L7 5.5M0.6 3L5 5.2L13.8 0.8" fill="none" stroke="#6a6a6a" stroke-width="1.1" stroke-linejoin="round"/><polygon points="4.3,4.8 7.4,5.6 5.3,8.3" fill="#6a6a6a"/></svg>
<span class="t" style="left:504.0px;top:203px;font-size:12px;color:#2b2b2b;transform:scaleX(0.987);transform-origin:0 0;">Send bestilling</span>
<svg style="left:614px;top:203.5px;" width="15" height="12" viewBox="0 0 15 12"><path d="M0.6 3L13.8 0.8L11.3 7L7 5.5M0.6 3L5 5.2L13.8 0.8" fill="none" stroke="#c4c4c4" stroke-width="1.1" stroke-linejoin="round"/><polygon points="4.3,4.8 7.4,5.6 5.3,8.3" fill="#c4c4c4"/><circle cx="9" cy="10" r="1.8" fill="#c4c4c4"/></svg>
<span class="t" style="left:632.5px;top:203px;font-size:12px;color:#a6a6a6;transform:scaleX(0.972);transform-origin:0 0;">Send og ansvarsplacér akten</span>
<svg style="left:816px;top:201px;" width="14" height="14" viewBox="0 0 14 14"><path d="M0 1.5Q0 0 1.5 0H12L14 2V12.5Q14 14 12.5 14H1.5Q0 14 0 12.5Z" fill="#2d6ab8"/><rect x="3" y="1.5" width="7.5" height="4" fill="#f0f0f0"/><rect x="2.5" y="8.5" width="9" height="5.5" fill="#f0f0f0"/><rect x="7.5" y="10" width="2.5" height="4" fill="#2d6ab8"/></svg>
<span class="t" style="left:834.5px;top:203px;font-size:12px;color:#2b2b2b;">Gem bestilling</span>
<svg style="left:944px;top:202px;" width="12" height="14" viewBox="0 0 12 14"><path d="M0 2H12M4 2V0.5H8V2" fill="none" stroke="#c8c8c8" stroke-width="1.2"/><path d="M1.5 3.5H10.5V13.5H1.5Z" fill="none" stroke="#c8c8c8" stroke-width="1.2"/><path d="M4 5V12M6 5V12M8 5V12" stroke="#c8c8c8" stroke-width="1"/></svg>
<span class="t" style="left:962.0px;top:203px;font-size:12px;color:#a6a6a6;">Slet bestilling</span>
<svg style="left:1065px;top:201px;" width="15" height="15" viewBox="0 0 15 15"><circle cx="7.5" cy="7.5" r="4.8" fill="none" stroke="#666" stroke-width="3"/><path d="M7.5 0V15M0 7.5H15M2.2 2.2L12.8 12.8M12.8 2.2L2.2 12.8" stroke="#666" stroke-width="2.4"/><circle cx="7.5" cy="7.5" r="2.5" fill="#f0f0f0"/></svg>
<span class="t" style="left:1083.5px;top:203px;font-size:12px;color:#2b2b2b;transform:scaleX(0.985);transform-origin:0 0;">Avanceret</span>
<svg style="left:1139.5px;top:207px;" width="5" height="3" viewBox="0 0 5 3"><path d="M0 0H5L2.5 3Z" fill="#444"/></svg>
<span class="t" style="left:482.0px;top:237px;font-size:12px;color:#2b2b2b;transform:scaleX(1.011);transform-origin:0 0;">Modtagere</span>
<svg style="left:548px;top:236px;" width="14" height="14" viewBox="0 0 14 14"><circle cx="7" cy="7" r="6.3" fill="none" stroke="#777" stroke-width="1.2"/><path d="M4.8 5.2Q4.8 3 7 3Q9.3 3 9.3 5Q9.3 6.3 7.8 7Q7 7.5 7 8.8" fill="none" stroke="#777" stroke-width="1.2"/><circle cx="7" cy="10.8" r="0.8" fill="#777"/></svg>
<div class="a" style="left:482px;top:256px;width:296px;height:60px;border:2px solid #1f6ac8;background:#fff"></div>
<span class="t" style="left:496.0px;top:265px;font-size:12px;color:#2b2b2b;transform:scaleX(0.971);transform-origin:0 0;">Kamilla Keller (Sagsbehandler, Kvalitetskontrol</span>
<svg style="left:741px;top:268px;" width="9" height="5" viewBox="0 0 9 5"><path d="M0 0H9L4.5 5Z" fill="#333"/></svg>
<svg style="left:756.5px;top:263px;" width="15" height="14" viewBox="0 0 15 14"><circle cx="10.4" cy="2.9" r="2.9" fill="#777"/><rect x="7.4" y="6.6" width="7.2" height="4.2" rx="2.1" fill="#777"/><circle cx="4.4" cy="5.9" r="3.2" fill="#777" stroke="#fff" stroke-width="0.8"/><rect x="0.2" y="9.6" width="8.6" height="4.2" rx="2.1" fill="#777" stroke="#fff" stroke-width="0.8"/></svg>
<svg style="left:760px;top:298px;" width="12" height="12" viewBox="0 0 12 12"><rect x="0.5" y="0.5" width="11" height="11" fill="#f4f4f4" stroke="#1f6ac8" stroke-width="1"/><path d="M3 9L8 4" stroke="#707070" stroke-width="2"/><path d="M4.5 2.5H9.5V7.5Z" fill="#707070"/><rect x="0.75" y="7.75" width="3.5" height="3.5" fill="#fff" stroke="#707070" stroke-width="1.5"/></svg>
<span class="t" style="left:482.0px;top:331px;font-size:12px;color:#2b2b2b;transform:scaleX(0.971);transform-origin:0 0;">Hvem kan se bestillingen?</span>
<svg style="left:626px;top:330px;" width="14" height="14" viewBox="0 0 14 14"><circle cx="7" cy="7" r="6.3" fill="none" stroke="#666" stroke-width="1.2"/><path d="M7 3V8.5" stroke="#666" stroke-width="1.5"/><circle cx="7" cy="10.7" r="0.9" fill="#666"/></svg>
<div class="a" style="left:482px;top:350px;width:296px;height:28px;border:2px solid #8c8c8c;background:#fff"></div>
<span class="t" style="left:494.0px;top:359px;font-size:12px;color:#2b2b2b;">Modtagerens enhed</span>
<svg style="left:759px;top:362.5px;" width="10" height="5" viewBox="0 0 10 5"><path d="M0 0H10L5.0 5Z" fill="#333"/></svg>
<span class="t" style="left:482.0px;top:393px;font-size:12px;color:#2b2b2b;">Type</span>
<div class="a" style="left:482px;top:412px;width:296px;height:60px;border:2px solid #8c8c8c;background:#fff"></div>
<span class="t" style="left:487.5px;top:418px;font-size:12px;color:#6a6a6a;">Vælg bestillingstyper</span>
<svg style="left:760.5px;top:421px;" width="10" height="5.5" viewBox="0 0 10 5.5"><path d="M0 0H10L5.0 5.5Z" fill="#888"/></svg>
<svg style="left:760px;top:454.5px;" width="12" height="12" viewBox="0 0 12 12"><rect x="0.5" y="0.5" width="11" height="11" fill="#f4f4f4" stroke="#1f6ac8" stroke-width="1"/><path d="M3 9L8 4" stroke="#707070" stroke-width="2"/><path d="M4.5 2.5H9.5V7.5Z" fill="#707070"/><rect x="0.75" y="7.75" width="3.5" height="3.5" fill="#fff" stroke="#707070" stroke-width="1.5"/></svg>
<span class="t" style="left:482.0px;top:487px;font-size:12px;color:#2b2b2b;transform:scaleX(0.981);transform-origin:0 0;">Bestillingsfrist</span>
<div class="a" style="left:482px;top:506px;width:145px;height:28px;border:2px solid #8c8c8c;background:#fff"></div>
<span class="t" style="left:493.5px;top:515px;font-size:12px;color:#6a6a6a;">00-00-0000</span>
<svg style="left:607px;top:513px;" width="13" height="14" viewBox="0 0 13 14"><rect x="0.5" y="3" width="12" height="10.5" fill="#fff" stroke="#777" stroke-width="1"/><rect x="0" y="2" width="13" height="3" fill="#4a7fc1"/><path d="M2.5 0V2M5 0V2M7.5 0V2M10 0V2" stroke="#4a7fc1" stroke-width="1"/><path d="M4.5 7.5H8.5L6 12" fill="none" stroke="#555" stroke-width="1"/></svg>
<div class="a" style="left:633px;top:506px;width:145px;height:28px;border:2px solid #8c8c8c;background:#fff"></div>
<span class="t" style="left:644.5px;top:515px;font-size:12px;color:#6a6a6a;transform:scaleX(0.966);transform-origin:0 0;">00:00</span>
<svg style="left:482px;top:552px;" width="16" height="16" viewBox="0 0 16 16"><rect x="0.75" y="0.75" width="14.5" height="14.5" fill="#fff" stroke="#333" stroke-width="1.5"/></svg>
<span class="t" style="left:503.5px;top:555px;font-size:12px;color:#2b2b2b;">Afslut bestilling, hvis frist overskrides</span>
<svg style="left:705px;top:553px;" width="14" height="14" viewBox="0 0 14 14"><circle cx="7" cy="7" r="6.3" fill="none" stroke="#777" stroke-width="1.2"/><path d="M4.8 5.2Q4.8 3 7 3Q9.3 3 9.3 5Q9.3 6.3 7.8 7Q7 7.5 7 8.8" fill="none" stroke="#777" stroke-width="1.2"/><circle cx="7" cy="10.8" r="0.8" fill="#777"/></svg>
<span class="t" style="left:482.0px;top:583px;font-size:12px;color:#2b2b2b;transform:scaleX(1.014);transform-origin:0 0;">Intern bestillingsfrist</span>
<div class="a" style="left:482px;top:602px;width:145px;height:28px;border:2px solid #8c8c8c;background:#fff"></div>
<span class="t" style="left:493.5px;top:611px;font-size:12px;color:#6a6a6a;">00-00-0000</span>
<svg style="left:607px;top:609px;" width="13" height="14" viewBox="0 0 13 14"><rect x="0.5" y="3" width="12" height="10.5" fill="#fff" stroke="#777" stroke-width="1"/><rect x="0" y="2" width="13" height="3" fill="#4a7fc1"/><path d="M2.5 0V2M5 0V2M7.5 0V2M10 0V2" stroke="#4a7fc1" stroke-width="1"/><path d="M4.5 7.5H8.5L6 12" fill="none" stroke="#555" stroke-width="1"/></svg>
<div class="a" style="left:633px;top:602px;width:145px;height:28px;border:2px solid #8c8c8c;background:#fff"></div>
<span class="t" style="left:644.5px;top:611px;font-size:12px;color:#6a6a6a;transform:scaleX(0.966);transform-origin:0 0;">00:00</span>
<span class="t" style="left:482.0px;top:651px;font-size:12px;color:#2b2b2b;transform:scaleX(0.967);transform-origin:0 0;">Returneres til</span>
<div class="a" style="left:482px;top:670px;width:296px;height:28px;border:2px solid #8c8c8c;background:#fff"></div>
<svg style="left:494.5px;top:679.5px;" width="11" height="11" viewBox="0 0 11 11"><circle cx="5.5" cy="5.5" r="5.5" fill="#74a78e"/></svg>
<span class="t" style="left:509.0px;top:679px;font-size:12px;color:#2b2b2b;transform:scaleX(0.987);transform-origin:0 0;">Martin Mouritzen (Sagsbehandler, Ministerk</span>
<svg style="left:741px;top:682.5px;" width="9" height="4.5" viewBox="0 0 9 4.5"><path d="M0 0H9L4.5 4.5Z" fill="#333"/></svg>
<svg style="left:756.5px;top:678px;" width="15" height="14" viewBox="0 0 15 14"><circle cx="10.4" cy="2.9" r="2.9" fill="#777"/><rect x="7.4" y="6.6" width="7.2" height="4.2" rx="2.1" fill="#777"/><circle cx="4.4" cy="5.9" r="3.2" fill="#777" stroke="#fff" stroke-width="0.8"/><rect x="0.2" y="9.6" width="8.6" height="4.2" rx="2.1" fill="#777" stroke="#fff" stroke-width="0.8"/></svg>
<svg style="left:482px;top:710px;" width="16" height="16" viewBox="0 0 16 16"><rect x="0.75" y="0.75" width="14.5" height="14.5" fill="#fff" stroke="#333" stroke-width="1.5"/><path d="M3 8L6.5 11.5L13 4" fill="none" stroke="#222" stroke-width="2.3"/></svg>
<span class="t" style="left:503.5px;top:713px;font-size:12px;color:#2b2b2b;">Informér også mig, når bestillingen er udført</span>
<span class="t" style="left:482.0px;top:741px;font-size:12px;color:#2b2b2b;transform:scaleX(0.961);transform-origin:0 0;">Standardbeskrivelse</span>
<div class="a" style="left:482px;top:760px;width:296px;height:28px;border:2px solid #8c8c8c;background:#fff"></div>
<svg style="left:758.5px;top:772px;" width="11" height="6" viewBox="0 0 11 6"><path d="M0 0H11L5.5 6Z" fill="#333"/></svg>
<svg style="left:801.5px;top:772px;" width="11" height="15" viewBox="0 0 11 15"><circle cx="5.5" cy="2" r="1.6" fill="none" stroke="#777" stroke-width="1.2"/><rect x="4.5" y="3.5" width="2" height="4" fill="#777"/><rect x="1" y="7.5" width="9" height="2.5" fill="#777"/><rect x="0" y="10" width="11" height="5" fill="#2a6ac0"/><path d="M2 10V12.5M4.5 10V12M7 10V12.5M9 10V12" stroke="#fff" stroke-width="0.8"/></svg>
<svg style="left:833px;top:774px;" width="13" height="12" viewBox="0 0 13 12"><path d="M1.5 4H8Q12 4 12 7.5Q12 11 8 11H6" fill="none" stroke="#c4c4c4" stroke-width="1.5"/><path d="M4.5 1L1.5 4L4.5 7" fill="none" stroke="#c4c4c4" stroke-width="1.5"/></svg>
<svg style="left:864px;top:774px;" width="13" height="12" viewBox="0 0 13 12"><path d="M11 4H5Q1 4 1 7.5Q1 11 5 11H7" fill="none" stroke="#c4c4c4" stroke-width="1.5"/><path d="M8.5 1L11.5 4L8.5 7" fill="none" stroke="#c4c4c4" stroke-width="1.5"/></svg>
<span class="t" style="left:895.0px;top:775px;font-size:11px;color:#333;transform:scaleX(0.979);transform-origin:0 0;">Calibri</span>
<svg style="left:1001px;top:778px;" width="8" height="4" viewBox="0 0 8 4"><path d="M0 0H8L4.0 4Z" fill="#333"/></svg>
<span class="t" style="left:1026.5px;top:775px;font-size:11px;color:#333;transform:scaleX(1.061);transform-origin:0 0;">12</span>
<svg style="left:1057px;top:778px;" width="8" height="4" viewBox="0 0 8 4"><path d="M0 0H8L4.0 4Z" fill="#333"/></svg>
<svg style="left:1085.5px;top:774px;" width="11" height="12" viewBox="0 0 11 12"><path d="M2 0V11M2 5.5Q2 4 5.5 4Q10 4 10 7.5Q10 11 5.5 11Q2 11 2 9" fill="none" stroke="#555" stroke-width="2.4"/></svg>
<svg style="left:1118.5px;top:775px;" width="8" height="11" viewBox="0 0 8 11"><path d="M6 0.5L2 10.5" stroke="#555" stroke-width="1.6"/></svg>
<svg style="left:1149.5px;top:774px;" width="11" height="12" viewBox="0 0 11 12"><path d="M1.5 1.5V6.5Q1.5 9 5.5 9Q9.5 9 9.5 6.5V1.5" fill="none" stroke="#555" stroke-width="1.6"/><path d="M0 11.3H11" stroke="#555" stroke-width="1.2"/></svg>
<svg style="left:1180.5px;top:773.5px;" width="13" height="13" viewBox="0 0 13 13"><path d="M2 9L6.5 0.5L11 9M3.5 6H9.5" fill="none" stroke="#555" stroke-width="1.6"/><rect x="0" y="10.5" width="13" height="2.5" fill="#111"/></svg>
<svg style="left:1197.5px;top:778px;" width="8" height="4" viewBox="0 0 8 4"><path d="M0 0H8L4.0 4Z" fill="#333"/></svg>
<svg style="left:1225.5px;top:773px;" width="12" height="14" viewBox="0 0 12 14"><path d="M3 8L9 1.5L11 3.5L5 10Z" fill="#666"/><path d="M3 8L2 11L5 10" fill="#666"/><rect x="0" y="12" width="12" height="2" fill="#fff"/></svg>
<svg style="left:1241px;top:778px;" width="8" height="4" viewBox="0 0 8 4"><path d="M0 0H8L4.0 4Z" fill="#333"/></svg>
<svg style="left:1268px;top:773px;" width="16" height="15" viewBox="0 0 16 15"><rect x="2" y="2" width="11" height="1" fill="#787878"/><rect x="2" y="4" width="10" height="1" fill="#787878"/><rect x="2" y="6" width="5" height="1" fill="#787878"/><rect x="2" y="8" width="10" height="1" fill="#787878"/><rect x="2" y="10" width="11" height="1" fill="#787878"/><rect x="2" y="12" width="8" height="1" fill="#787878"/><rect x="1" y="1" width="1.2" height="13" fill="#2a6ac0"/></svg>
<svg style="left:1300px;top:773px;" width="16" height="15" viewBox="0 0 16 15"><rect x="1" y="2" width="12" height="1" fill="#787878"/><rect x="2" y="4" width="10" height="1" fill="#787878"/><rect x="4" y="6" width="6" height="1" fill="#787878"/><rect x="2" y="8" width="10" height="1" fill="#787878"/><rect x="1" y="10" width="12" height="1" fill="#787878"/><rect x="3" y="12" width="8" height="1" fill="#787878"/><rect x="6.4" y="1" width="1.2" height="13" fill="#8fb4e0"/></svg>
<svg style="left:1332px;top:773px;" width="16" height="15" viewBox="0 0 16 15"><rect x="1" y="2" width="11" height="1" fill="#787878"/><rect x="2" y="4" width="10" height="1" fill="#787878"/><rect x="6" y="6" width="6" height="1" fill="#787878"/><rect x="2" y="8" width="10" height="1" fill="#787878"/><rect x="1" y="10" width="11" height="1" fill="#787878"/><rect x="4" y="12" width="8" height="1" fill="#787878"/><rect x="12.5" y="1" width="1.2" height="13" fill="#2a6ac0"/></svg>
<svg style="left:1364px;top:773px;" width="16" height="15" viewBox="0 0 16 15"><circle cx="3" cy="3.5" r="1.5" fill="none" stroke="#2a6ac0" stroke-width="1.2"/><circle cx="3" cy="10.5" r="1.5" fill="none" stroke="#2a6ac0" stroke-width="1.2"/><rect x="6" y="2" width="7" height="1" fill="#787878"/><rect x="6" y="4" width="7" height="1" fill="#787878"/><rect x="6" y="6" width="3" height="1" fill="#787878"/><rect x="6" y="9" width="7" height="1" fill="#787878"/><rect x="6" y="11" width="7" height="1" fill="#787878"/><rect x="6" y="13" width="3" height="1" fill="#787878"/></svg>
<svg style="left:1395.5px;top:773px;" width="16" height="15" viewBox="0 0 16 15"><path d="M1.5 2.5L3 1.5V6M1.5 6H4.5M1 9.5Q1.5 8.5 2.8 8.5Q4.2 8.5 4.2 9.8Q4.2 10.8 1 13H4.5" fill="none" stroke="#2a6ac0" stroke-width="1.2"/><rect x="7" y="2" width="7" height="1" fill="#787878"/><rect x="7" y="4" width="7" height="1" fill="#787878"/><rect x="7" y="6" width="3" height="1" fill="#787878"/><rect x="7" y="9" width="7" height="1" fill="#787878"/><rect x="7" y="11" width="7" height="1" fill="#787878"/><rect x="7" y="13" width="3" height="1" fill="#787878"/></svg>
<svg style="left:1437px;top:778px;" width="15" height="4" viewBox="0 0 15 4"><circle cx="2" cy="2" r="1.5" fill="#666"/><circle cx="7" cy="2" r="1.5" fill="#666"/><circle cx="12" cy="2" r="1.5" fill="#666"/></svg>
</body></html>
